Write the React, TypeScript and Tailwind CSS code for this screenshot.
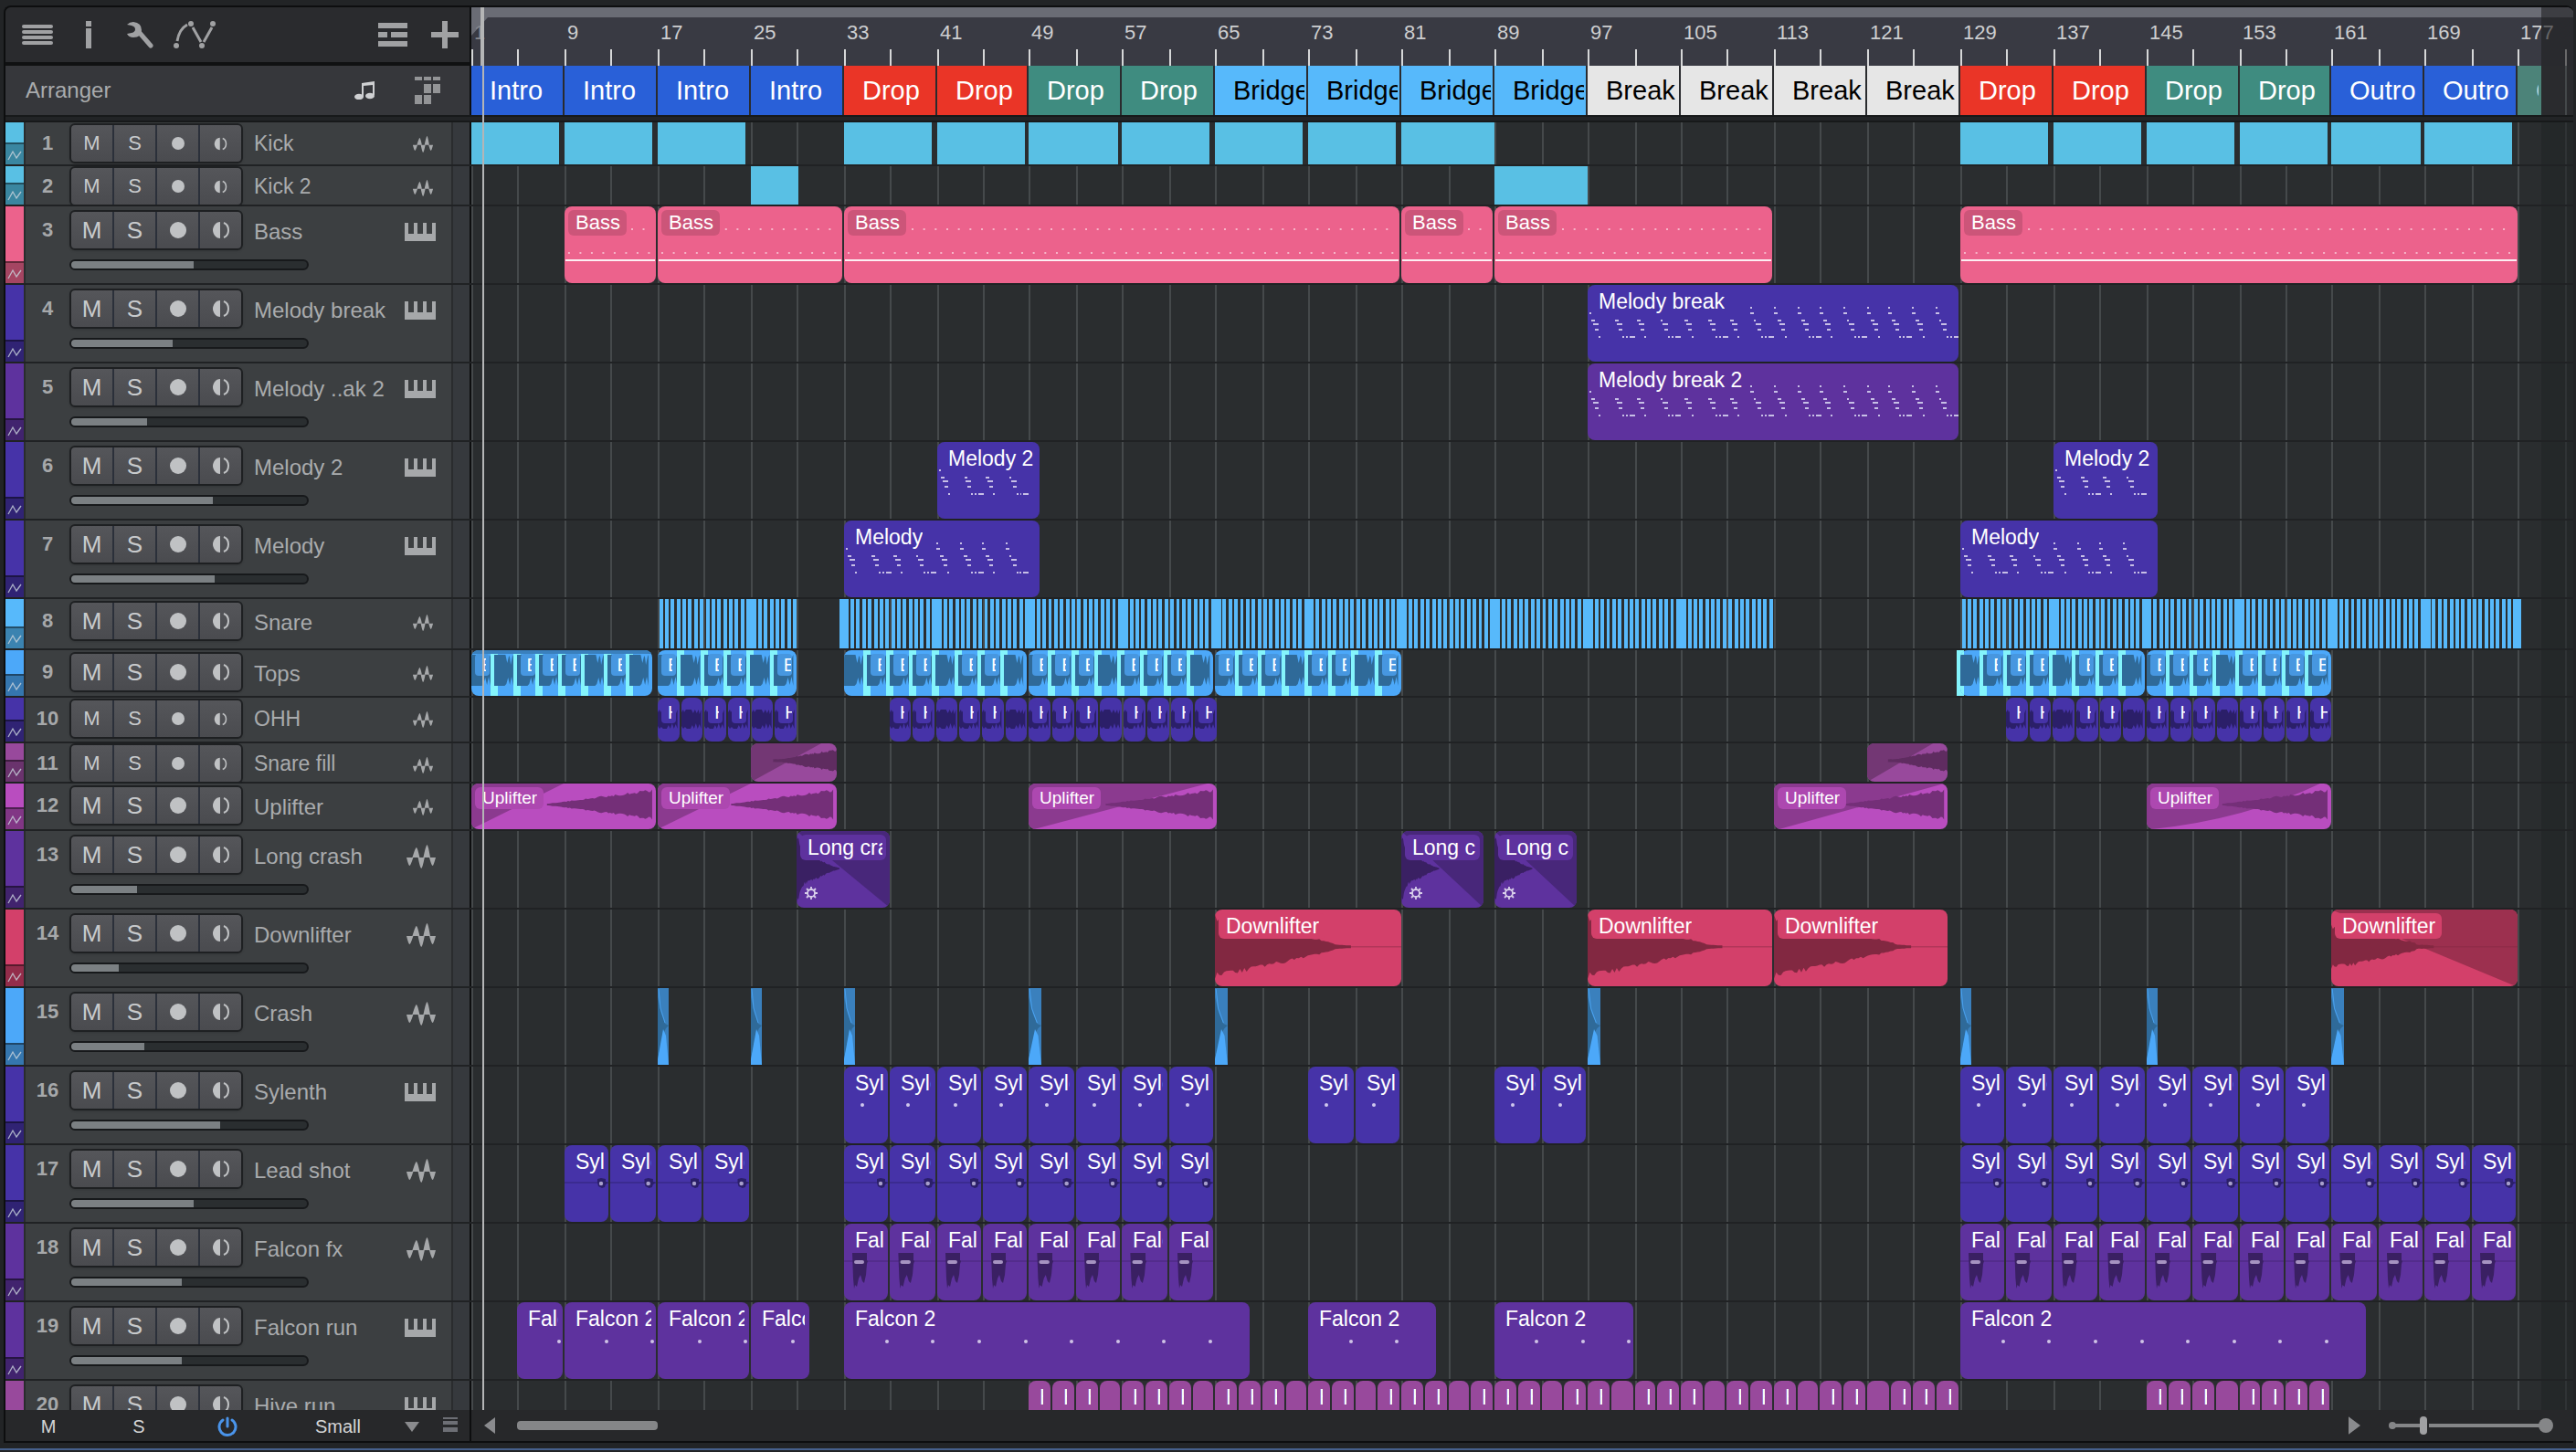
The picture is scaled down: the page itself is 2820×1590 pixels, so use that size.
import type { ReactNode } from "react";
import clsx from "clsx";

// number of bars that fit in the visible part of the timeline
const VISIBLE_BARS = 180.72;

// bar lines snap down to the two pixel raster of the grid
const barPos = (bar: number) =>
  `round(down, ${((bar - 1) / VISIBLE_BARS) * 100}% + 0.8px, 2px)`;
const barWidth = (from: number, to: number) => `calc(${barPos(to)} - ${barPos(from)})`;

type Kind =
  | "block"
  | "bass"
  | "melody"
  | "snare"
  | "tops"
  | "hat"
  | "fill"
  | "uplifter"
  | "longCrash"
  | "downlifter"
  | "crash"
  | "sylenth"
  | "lead"
  | "fx"
  | "run"
  | "hive";

interface Clip {
  from: number;
  to: number;
  label?: string;
  cells?: string;
  overlap?: boolean;
  fade?: string;
  notesFrom?: number;
  decay?: number;
}

interface Track {
  name: string;
  icon: "keys" | "wave" | "bigWave";
  kind: Kind;
  color: string;
  autoColor: string;
  row: string;
  small?: boolean;
  volume?: number;
  clips: Clip[];
}

const every = (from: number, to: number, step: number, label?: string) => {
  const clips: Clip[] = [];
  for (let bar = from; bar < to; bar += step) {
    clips.push({ from: bar, to: bar + step, label });
  }
  return clips;
};

const kicks = (starts: number[]) =>
  starts.map((bar) => ({ from: bar, to: bar + 7.55 }));

const hiveClips = () => {
  const blank = [3, 7, 11, 14, 18, 22, 25, 29, 33, 36];
  const first = every(49, 129, 2).map((clip, i) => ({
    ...clip,
    label: blank.includes(i) ? undefined : "H",
  }));
  const second = every(145, 161, 2).map((clip, i) => ({
    ...clip,
    label: i === 3 ? undefined : "H",
  }));
  return [...first, ...second];
};

const INDIGO = "bg-[#4633a8]";
const INDIGO_DARK = "bg-[#302374]";
const PURPLE = "bg-[#5e329e]";
const PURPLE_DARK = "bg-[#41236e]";
const CYAN = "bg-[#59c0e4]";
const CYAN_DARK = "bg-[#3a86a0]";
const TALL = "h-[86px]";
const SHORT = "h-[44px]";

const tracks: Track[] = [
  {
    name: "Kick", icon: "wave", kind: "block", color: CYAN, autoColor: CYAN_DARK,
    row: "h-[48px]", small: true,
    clips: [
      ...kicks([1, 9, 17, 33, 41, 49, 57, 65, 73]),
      { from: 81, to: 89 },
      ...kicks([129, 137, 145, 153, 161, 169]),
    ],
  },
  {
    name: "Kick 2", icon: "wave", kind: "block", color: CYAN, autoColor: CYAN_DARK,
    row: SHORT, small: true,
    clips: [{ from: 25, to: 29.1 }, { from: 89, to: 97 }],
  },
  {
    name: "Bass", icon: "keys", kind: "bass", color: "bg-[#ec628c]", autoColor: "bg-[#a54562]",
    row: TALL, volume: 52,
    clips: [
      { from: 9, to: 17 }, { from: 17, to: 33 }, { from: 33, to: 81 },
      { from: 81, to: 89 }, { from: 89, to: 113 }, { from: 129, to: 177.1 },
    ].map((clip) => ({ ...clip, label: "Bass" })),
  },
  {
    name: "Melody break", icon: "keys", kind: "melody", color: INDIGO, autoColor: INDIGO_DARK,
    row: TALL, volume: 43,
    clips: [{ from: 97, to: 129.1, label: "Melody break", notesFrom: 7 }],
  },
  {
    name: "Melody ..ak 2", icon: "keys", kind: "melody", color: PURPLE, autoColor: PURPLE_DARK,
    row: TALL, volume: 32,
    clips: [{ from: 97, to: 129.1, label: "Melody break 2", notesFrom: 7 }],
  },
  {
    name: "Melody 2", icon: "keys", kind: "melody", color: INDIGO, autoColor: INDIGO_DARK,
    row: TALL, volume: 60,
    clips: [
      { from: 41, to: 50.1, label: "Melody 2", notesFrom: 5 },
      { from: 137, to: 146.1, label: "Melody 2", notesFrom: 5 },
    ],
  },
  {
    name: "Melody", icon: "keys", kind: "melody", color: INDIGO, autoColor: INDIGO_DARK,
    row: TALL, volume: 61,
    clips: [
      { from: 33, to: 50.1, label: "Melody", notesFrom: 4 },
      { from: 129, to: 146.1, label: "Melody", notesFrom: 4 },
    ],
  },
  {
    name: "Snare", icon: "wave", kind: "snare", color: "bg-[#57b9fb]", autoColor: "bg-[#3b83b0]",
    row: "h-[56px]",
    clips: [{ from: 17, to: 29.1 }, { from: 32.6, to: 113.2 }, { from: 129, to: 177.3 }],
  },
  {
    name: "Tops", icon: "wave", kind: "tops", color: "bg-[#4ca8f9]", autoColor: "bg-[#3576ae]",
    row: "h-[52px]",
    clips: [
      { from: 1, to: 16.7, cells: "10111010", fade: "top" },
      { from: 17, to: 29.1, cells: "101101" },
      { from: 33, to: 49, cells: "01110110" },
      { from: 49, to: 65, cells: "11101110" },
      { from: 65, to: 81.2, cells: "11101101" },
      { from: 129, to: 145, cells: "01110110", overlap: true },
      { from: 145, to: 161.1, cells: "11101111" },
    ],
  },
  {
    name: "OHH", icon: "wave", kind: "hat", color: INDIGO, autoColor: INDIGO_DARK,
    row: "h-[50px]", small: true,
    clips: [
      { from: 17, to: 29.1, cells: "101101" },
      { from: 37, to: 49, cells: "110110" },
      { from: 49, to: 65.2, cells: "11101111" },
      { from: 133, to: 145, cells: "110110" },
      { from: 145, to: 161.1, cells: "11101111" },
    ],
  },
  {
    name: "Snare fill", icon: "wave", kind: "fill", color: "bg-[#98499c]", autoColor: "bg-[#6a336d]",
    row: SHORT, small: true,
    clips: [{ from: 25, to: 32.6 }, { from: 121, to: 128.1 }],
  },
  {
    name: "Uplifter", icon: "wave", kind: "uplifter", color: "bg-[#b94dbf]", autoColor: "bg-[#813685]",
    row: "h-[52px]",
    clips: [
      { from: 1, to: 17, fade: "M0 100L50 0H0Z" },
      { from: 17, to: 32.6, fade: "M0 100L52 0H0Z" },
      { from: 49, to: 65.2, fade: "M3 100L95 0H0V100Z" },
      { from: 113, to: 128.1, fade: "M3 100L98 0H0V100Z" },
      { from: 145, to: 161.1, fade: "M3 100Q54 78 94 0H0V100Z" },
    ].map((clip) => ({ ...clip, label: "Uplifter" })),
  },
  {
    name: "Long crash", icon: "bigWave", kind: "longCrash", color: PURPLE, autoColor: PURPLE_DARK,
    row: TALL, volume: 28,
    clips: [
      { from: 29, to: 37.1, label: "Long crash" },
      { from: 81, to: 88.2, label: "Long crash" },
      { from: 89, to: 96.2, label: "Long crash" },
    ],
  },
  {
    name: "Downlifter", icon: "bigWave", kind: "downlifter", color: "bg-[#d3406a]", autoColor: "bg-[#932c4a]",
    row: TALL, volume: 20,
    clips: [
      { from: 65, to: 81.2, label: "Downlifter", decay: 73 },
      { from: 97, to: 113, label: "Downlifter", decay: 73 },
      { from: 113, to: 128.1, label: "Downlifter", decay: 79 },
      { from: 161, to: 177.1, label: "Downlifter", decay: 55, fade: "M0 0L97 98L100 100V0Z" },
    ],
  },
  {
    name: "Crash", icon: "bigWave", kind: "crash", color: "bg-[#4ca8f9]", autoColor: "bg-[#3576ae]",
    row: TALL, volume: 31,
    clips: [17, 25, 33, 49, 65, 97, 129, 145, 161].map((bar) => ({ from: bar, to: bar + 1.05 })),
  },
  {
    name: "Sylenth", icon: "keys", kind: "sylenth", color: INDIGO, autoColor: INDIGO_DARK,
    row: TALL, volume: 63,
    clips: [
      ...every(33, 65, 4, "Sylenth"), ...every(73, 81, 4, "Sylenth"),
      ...every(89, 97, 4, "Sylenth"), ...every(129, 161, 4, "Sylenth"),
    ],
  },
  {
    name: "Lead shot", icon: "bigWave", kind: "lead", color: INDIGO, autoColor: INDIGO_DARK,
    row: TALL, volume: 52,
    clips: [
      ...every(9, 25, 4, "Sylenth"), ...every(33, 65, 4, "Sylenth"),
      ...every(129, 177, 4, "Sylenth"),
    ],
  },
  {
    name: "Falcon fx", icon: "bigWave", kind: "fx", color: PURPLE, autoColor: PURPLE_DARK,
    row: TALL, volume: 47,
    clips: [...every(33, 65, 4, "Falcon"), ...every(129, 177, 4, "Falcon")],
  },
  {
    name: "Falcon run", icon: "keys", kind: "run", color: PURPLE, autoColor: PURPLE_DARK,
    row: TALL, volume: 47,
    clips: [
      { from: 5, to: 9 }, { from: 9, to: 17 }, { from: 17, to: 25 }, { from: 25, to: 30.2 },
      { from: 33, to: 68.1 }, { from: 73, to: 84.1 }, { from: 89, to: 101.1 }, { from: 129, to: 164.1 },
    ].map((clip) => ({ ...clip, label: "Falcon 2" })),
  },
  {
    name: "Hive run", icon: "keys", kind: "hive", color: "bg-[#98499c]", autoColor: "bg-[#6a336d]",
    row: TALL, volume: 50,
    clips: hiveClips(),
  },
];

const section = (bar: number, name: string, style: string) => ({ bar, name, style });
const BLUE = "bg-[#2960d8] text-white";
const RED = "bg-[#ea3527] text-white";
const GREEN = "bg-[#3f8c80] text-white";
const SKY = "bg-[#57b9fb] text-black";
const WHITE = "bg-[#e6e6e6] text-black";

const sections = [
  ...[1, 9, 17, 25].map((bar) => section(bar, "Intro", BLUE)),
  ...[33, 41].map((bar) => section(bar, "Drop", RED)),
  ...[49, 57].map((bar) => section(bar, "Drop", GREEN)),
  ...[65, 73, 81, 89].map((bar) => section(bar, "Bridge", SKY)),
  ...[97, 105, 113, 121].map((bar) => section(bar, "Break", WHITE)),
  ...[129, 137].map((bar) => section(bar, "Drop", RED)),
  ...[145, 153].map((bar) => section(bar, "Drop", GREEN)),
  ...[161, 169].map((bar) => section(bar, "Outro", BLUE)),
];

const gridBars = Array.from({ length: 46 }, (_, i) => 1 + i * 4).filter(
  (bar) => bar - 1 < VISIBLE_BARS
);

// builds a jagged, roughly symmetric outline from [x, amplitude] stops
const wavePath = (stops: [number, number][], middle: number) => {
  const top: string[] = [];
  const bottom: string[] = [];
  const start = stops[0][0];
  const end = stops[stops.length - 1][0];
  const steps = 60;
  for (let i = 0; i <= steps; i++) {
    const x = start + ((end - start) * i) / steps;
    const next = Math.max(1, stops.findIndex((stop) => stop[0] >= x));
    const [x0, a0] = stops[next - 1];
    const [x1, a1] = stops[next];
    const amp = a0 + ((a1 - a0) * (x - x0)) / (x1 - x0);
    const noise = 1 - 0.2 * Math.abs(Math.sin(i * i * 1.7));
    top.push(`${x.toFixed(1)} ${(middle - amp * noise).toFixed(1)}`);
    bottom.unshift(`${x.toFixed(1)} ${(middle + amp * noise).toFixed(1)}`);
  }
  return `M${top.join("L")}L${bottom.join("L")}Z`;
};

const Drawing = ({ box = "0 0 100 100", children }: { box?: string; children: ReactNode }) => (
  <svg
    className="absolute inset-0 w-full h-full"
    viewBox={box}
    preserveAspectRatio="none"
    aria-hidden="true"
  >
    {children}
  </svg>
);

const ClipLabel = ({ text, className }: { text: string; className?: string }) => (
  <div
    className={clsx(
      "absolute left-1 top-1 max-w-[calc(100%-8px)] rounded-md pl-2 text-white",
      className ?? "h-7 pr-px text-[23px] leading-7"
    )}
  >
    <span className="block overflow-hidden whitespace-nowrap">{text}</span>
  </div>
);

const BassNotes = ({ bars }: { bars: number }) => {
  const notes = Array.from({ length: Math.floor(bars) }, (_, i) => i);
  return (
    <Drawing box={`0 0 ${bars * 12.73} 84`}>
      {notes.map((i) => (
        <g key={i} fill="#f7b4c8">
          {i > 5 && <rect x={i * 12.73 - 2} y="24" width="2" height="2" />}
          <rect x={i * 12.73 + 4} y="50" width="2" height="2" />
        </g>
      ))}
      <rect x="1" y="58" width={bars * 12.73 - 2} height="2" fill="#fdeef3" />
    </Drawing>
  );
};

const MelodyNotes = ({ bars, notesFrom }: { bars: number; notesFrom: number }) => {
  const width = bars * 12.73 - 2;
  const motifs = Array.from({ length: Math.floor(bars / 2) }, (_, i) => i);
  return (
    <Drawing box={`0 0 ${width} 84`}>
      {motifs.map((i) => {
        const x = Math.round((i * 25.46) / 2) * 2;
        return (
          <g key={i} fill="#c7bfe6" shapeRendering="crispEdges">
            {i >= notesFrom && <rect x={x} y="24" width="2" height="2" />}
            {i >= notesFrom && <rect x={x} y="30" width="4" height="2" />}
            {i === 0 && <rect x="2" y="30" width="2" height="2" />}
            <rect x={x + 4} y="38" width={i % 4 === 3 ? 2 : 4} height="2" />
            <rect x={x + 6} y="42" width="6" height="2" />
            <rect x={x + 8} y="48" width="4" height="2" />
            <rect x={x + 12} y="56" width="2" height="2" />
            {i % 2 === 1 && <rect x={x + 16} y="56" width="2" height="2" />}
            {i % 2 === 1 && <rect x={x + 20} y="56" width="6" height="2" />}
          </g>
        );
      })}
    </Drawing>
  );
};

const SnareHits = ({ from, to }: { from: number; to: number }) => {
  const hits: number[] = [];
  for (let bar = Math.ceil(from * 2) / 2; bar < to - 0.2; bar += 0.5) hits.push(bar);
  return (
    <Drawing box={`${from} 0 ${to - from} 10`}>
      <g fill="#57b9fb" shapeRendering="crispEdges">
        {hits.map((bar) =>
          (bar - 1) % 8 === 0 && bar !== from ? (
            <rect key={bar} x={bar - 0.32} y="0" width="0.8" height="10" />
          ) : (
            <rect key={bar} x={bar + 0.13} y="0" width="0.31" height="10" />
          )
        )}
      </g>
    </Drawing>
  );
};

const CellLabel = ({ text, last, className }: { text: string; last: boolean; className: string }) => (
  <div
    className={clsx(
      "absolute left-1 top-1 h-6 w-4 rounded-sm pl-[7px] text-[20px] leading-6 text-white",
      className
    )}
  >
    <span className={clsx("block overflow-hidden", last ? "w-2" : "w-[5px]")}>{text}</span>
  </div>
);

const TopsCells = ({ clip }: { clip: Clip }) => (
  <div className="relative flex h-full overflow-hidden rounded-lg bg-[#4ca8f9]">
    {clip.cells!.split("").map((cell, i) => (
      <div key={i} className="relative flex-1">
        {(i > 0 || clip.overlap) && (
          <div className="absolute inset-y-0 -left-1 w-2 bg-[#84f4fc]" />
        )}
        <Drawing box="0 0 26 50">
          <path
            d="M0 5H13L15 14L17 6L18 8L19 16L21 7L22 5V39L20 29L18 38L16 30L14 37L12 39H0Z"
            fill="#2f6a99"
          />
        </Drawing>
        {cell === "1" && (
          <CellLabel text="E" last={i === clip.cells!.length - 1} className="bg-[#4797e0]" />
        )}
      </div>
    ))}
    {clip.fade && <div className="absolute inset-x-0 top-0 h-1 bg-[#3a80bd]" />}
  </div>
);

const HatCells = ({ cells }: { cells: string }) => (
  <div className="flex h-full gap-0.5">
    {cells.split("").map((cell, i) => (
      <div key={i} className="relative flex-1 overflow-hidden rounded-lg bg-[#4633a8]">
        <Drawing box="0 0 24 48">
          <path
            d="M0 16L2 13L3 16L5 13H11L13 17L15 13L17 17L19 13L20 18L22 13V34L20 29L18 34L16 28L14 34L12 30L10 34H6L4 32L2 34L0 31Z"
            fill="#2b1f69"
          />
        </Drawing>
        {cell === "1" && (
          <CellLabel text="H" last={i === cells.length - 1} className="bg-[#4633a8]" />
        )}
      </div>
    ))}
  </div>
);

const Gear = () => (
  <svg className="absolute bottom-2 left-2 size-4" viewBox="0 0 16 16" aria-hidden="true">
    <circle cx="8" cy="8" r="4" fill="none" stroke="#d8cfea" strokeWidth="1.8" />
    <path
      d="M8 1v3M8 12v3M1 8h3M12 8h3M3 3l2 2M11 11l2 2M13 3l-2 2M5 11l-2 2"
      stroke="#d8cfea"
      strokeWidth="1.8"
    />
  </svg>
);

const Dots = ({ clip }: { clip: Clip }) => {
  const bars: number[] = [];
  for (let bar = 3.7; bar < clip.to - clip.from && bars.length < 8; bar += 4) bars.push(bar);
  return (
    <>
      {bars.map((bar) => (
        <span
          key={bar}
          className="absolute top-[41px] h-1 w-1 -translate-x-1/2 rounded-full bg-[#cfc3e6]"
          style={{ left: `${(bar / (clip.to - clip.from)) * 100}%` }}
        />
      ))}
    </>
  );
};

const ClipBody = ({ track, clip }: { track: Track; clip: Clip }) => {
  const bars = clip.to - clip.from;
  switch (track.kind) {
    case "block":
      return null;
    case "bass":
      return (
        <>
          <BassNotes bars={bars} />
          <ClipLabel text={clip.label!} className="h-7 pr-[7px] bg-[#cc5579] text-[22px] leading-7" />
        </>
      );
    case "melody":
      return (
        <>
          <MelodyNotes bars={bars} notesFrom={clip.notesFrom!} />
          <ClipLabel text={clip.label!} />
        </>
      );
    case "fill":
      return (
        <Drawing>
          <path d="M4 96L82 0H0V100Z" fill="#733774" />
          <path d={wavePath([[26, 4], [38, 5], [70, 20], [100, 30]], 45)} fill="#5f2c60" />
        </Drawing>
      );
    case "uplifter":
      return (
        <>
          <Drawing>
            <path d={clip.fade} fill="#8b3a8f" />
            <path d={wavePath([[41, 2], [52, 8], [80, 24], [98, 34]], 46)} fill="#742f78" />
          </Drawing>
          <ClipLabel text={clip.label!} className="h-6 pr-[7px] bg-[#ad48b0] text-[19px] leading-6" />
        </>
      );
    case "longCrash":
      return (
        <>
          <Drawing>
            <path d="M0 0L98 98L100 92V0Z" fill="#48277a" />
            <path d={wavePath([[0, 50], [8, 22], [22, 14], [40, 3], [46, 1]], 49)} fill="#3a2063" />
          </Drawing>
          <ClipLabel text={clip.label!} className="h-7 pr-1 bg-[#5e329e] text-[23px] leading-7" />
          <Gear />
        </>
      );
    case "downlifter":
      return (
        <>
          <Drawing>
            {clip.fade && <path d={clip.fade} fill="#9c304f" />}
            <path d="M0 48.5H100" stroke="#822841" strokeOpacity="0.4" strokeWidth="2" />
            <path
              d={wavePath(
                [
                  [0, clip.fade ? 29 : 42],
                  [10, clip.fade ? 27 : 38],
                  [clip.decay! - 10, 6],
                  [clip.decay! - 9, 3],
                  [clip.decay!, 2],
                ],
                48.5
              )}
              fill="#822841"
            />
          </Drawing>
          <ClipLabel text={clip.label!} className="h-7 pr-[7px] bg-[#d3406a] text-[23px] leading-7" />
        </>
      );
    case "crash":
      return (
        <Drawing box="0 0 12 84">
          <path d="M0 0H12V84H0Z" fill="#3a80bd" />
          <path d="M0 10L4 28L8 39L12 41L9 44L7 48L0 78Z" fill="#2f6a99" />
          <path d="M0 84V78L6 45L9 52L12 84Z" fill="#4ca8f9" />
          <path d="M1 1L3 22L8 38" fill="none" stroke="#4ca8f9" strokeWidth="0.8" />
        </Drawing>
      );
    case "sylenth":
      return (
        <>
          <ClipLabel text={clip.label!} />
          <span className="absolute left-[18px] top-[40px] h-1 w-1 rounded-full bg-[#cfc8ec]" />
        </>
      );
    case "lead":
      return (
        <>
          <Drawing box="0 0 48 84">
            <path d="M0 41H48" stroke="#3b2b90" strokeWidth="2" />
            <path d="M36 37L40 36L45 37V40L48 41L45 43L44 46L41 47L37 45L36 41Z" fill="#2b1f69" />
            <circle cx="40" cy="42" r="2.2" fill="#a79fcb" />
          </Drawing>
          <ClipLabel text={clip.label!} />
        </>
      );
    case "fx":
      return (
        <>
          <Drawing box="0 0 48 84">
            <path d="M0 41H48" stroke="#532c8c" strokeWidth="2" />
            <path d="M9 32H25V40L26 41L25 44L24 56L22 65L20 63L18 56L16 60L14 69L12 67L11 71L10 60Z" fill="#3a2063" />
            <rect x="11" y="40" width="11" height="4" rx="2" fill="#a693c1" />
          </Drawing>
          <ClipLabel text={clip.label!} />
        </>
      );
    case "run":
      return (
        <>
          <ClipLabel text={clip.label!} />
          <Dots clip={clip} />
        </>
      );
    case "hive":
      return clip.label ? (
        <div className="absolute left-3 top-1 text-[23px] leading-7 text-white">
          <span className="block w-1 overflow-hidden">{clip.label}</span>
        </div>
      ) : null;
    default:
      return null;
  }
};

const ClipView = ({ track, clip }: { track: Track; clip: Clip }) => {
  const left = barPos(clip.from);
  const width = barWidth(clip.from, clip.to);

  if (track.kind === "snare") {
    return (
      <div className="absolute inset-y-0" style={{ left, width }}>
        <SnareHits from={clip.from} to={clip.to} />
      </div>
    );
  }
  if (track.kind === "tops" || track.kind === "hat") {
    return (
      <div className="absolute inset-y-0 pr-0.5" style={{ left, width }}>
        {clip.overlap && <div className="absolute inset-y-0 -left-1 w-2 bg-[#84f4fc]" />}
        {track.kind === "tops" ? <TopsCells clip={clip} /> : <HatCells cells={clip.cells!} />}
      </div>
    );
  }

  const square = track.kind === "block" || track.kind === "crash";
  return (
    <div className={clsx("absolute inset-y-0", !square && "pr-0.5")} style={{ left, width }}>
      <div className={clsx("relative h-full overflow-hidden", track.color, !square && "rounded-lg")}>
        <ClipBody track={track} clip={clip} />
      </div>
    </div>
  );
};

const TrackIcon = ({ icon }: { icon: Track["icon"] }) => {
  if (icon === "keys") {
    return (
      <svg className="h-5 w-[34px]" viewBox="0 0 34 20" fill="#a6a8aa" aria-hidden="true">
        <path d="M0 0H4V12H10V0H14V12H20V0H24V12H30V0H34V20H0Z" />
      </svg>
    );
  }
  return (
    <svg
      className={icon === "wave" ? "ml-1.5 h-[18px] w-6" : "ml-0.5 h-[26px] w-8"}
      viewBox="0 0 32 26"
      fill="#a6a8aa"
      aria-hidden="true"
    >
      <path d="M6.4 14Q9.8 3 10.8 3Q12 3 14.4 14ZM18.4 14Q21.4 0 22.5 0Q23.6 0 26 14Z" />
      <path d="M0 14H7.4Q4.4 23 3.4 23Q2.2 23 0 14ZM12.6 14H19.8Q17.4 26 16.2 26Q15 26 12.6 14ZM25 14H32Q29.6 23 28.6 23Q27.4 23 25 14Z" />
    </svg>
  );
};

const TrackHeader = ({ track, index }: { track: Track; index: number }) => {
  const id = `volume-${index}`;
  const tall = track.volume !== undefined;
  const large = !track.small;
  return (
    <div className="flex h-full w-[510px] shrink-0 border-r-2 border-[#0d0e0f] bg-[#3c3f41]">
      <div className={clsx("flex w-5 shrink-0 flex-col justify-end", track.color)}>
        <div className={clsx("h-6 border-t-2 border-black/40", track.autoColor)}>
          <svg className="h-[22px] w-5" viewBox="0 0 20 22" aria-hidden="true">
            <path d="M3 17L8 8L12 15L17 8" fill="none" stroke="#c9d3dc" strokeOpacity="0.8" strokeWidth="1.3" />
          </svg>
        </div>
      </div>
      <div className="relative flex min-w-0 flex-1 flex-col border-l-2 border-[#2a2c2e]">
        <div
          className={clsx(
            "flex items-center",
            tall ? "pt-1" : large ? "pt-0.5" : track.row !== SHORT && "pt-px"
          )}
        >
          <span className="w-12 text-center text-[22px] font-bold leading-6 text-[#a6a8aa]">
            {index}
          </span>
          <div
            className={clsx(
              "flex h-[44px] w-[190px] shrink-0 divide-x-2 divide-[#2b303a] rounded-md border-2 border-[#1e2022] bg-linear-to-b from-[#55565a] to-[#4a4b4f] text-[#c8cacc] shadow-sm",
              large ? "text-[26px]" : "text-[22px]"
            )}
          >
            <button className="flex-1 leading-9" aria-label={`Mute ${track.name}`}>M</button>
            <button className="flex-1 leading-9" aria-label={`Solo ${track.name}`}>S</button>
            <button className="flex flex-1 items-center justify-center" aria-label={`Record ${track.name}`}>
              <span className={clsx("rounded-full bg-[#c0c2c4]", large ? "size-[18px]" : "size-[14px]")} />
            </button>
            <button className="flex flex-1 items-center justify-center" aria-label={`Monitor ${track.name}`}>
              <svg className={large ? "size-[20px]" : "size-[15px]"} viewBox="0 0 20 20" aria-hidden="true">
                <path d="M9 1V19C4 19 1 14 1 10S4 1 9 1Z" fill="#c0c2c4" />
                <path d="M13 2Q18 4 18 10T13 18" fill="none" stroke="#c0c2c4" strokeWidth="2" />
              </svg>
            </button>
          </div>
          <span
            className={clsx(
              "ml-3 flex-1 whitespace-nowrap leading-7 text-[#a9abad]",
              large ? "pt-1 text-[24px]" : "text-[23px]"
            )}
          >
            {track.name}
          </span>
        </div>
        <div
          className={clsx(
            "absolute right-4 flex h-[44px] w-9 items-center justify-center",
            tall ? "top-1.5" : large ? "top-1" : "top-0.5"
          )}
        >
          <TrackIcon icon={track.icon} />
        </div>
        {tall && (
          <>
            <label htmlFor={id} className="sr-only">
              Volume {track.name}
            </label>
            <input
              id={id}
              type="range"
              defaultValue={track.volume}
              className="ml-12 mt-[10px] block h-3 w-[262px] appearance-none rounded-md border-2 border-[#17191b] [&::-webkit-slider-thumb]:size-0 [&::-webkit-slider-thumb]:appearance-none"
              style={{
                background: `linear-gradient(to right, #7b8083 ${track.volume}%, #2a2e30 ${track.volume}%)`,
              }}
            />
          </>
        )}
      </div>
      <div className="w-5 shrink-0 border-l-2 border-[#2a2c2e] bg-[#36393d]" />
    </div>
  );
};

const Toolbar = () => (
  <div className="flex h-16 items-center border-b-4 border-[#101112] bg-[#2a2b2e] pl-[18px] pr-3">
    <button aria-label="Menu">
      <svg className="h-6 w-[34px]" viewBox="0 0 34 24" fill="#a0a1a3">
        <rect y="1" width="34" height="4" rx="2" />
        <rect y="7" width="34" height="4" rx="2" />
        <rect y="13" width="34" height="4" rx="2" />
        <rect y="19" width="34" height="4" rx="2" />
      </svg>
    </button>
    <button className="ml-[36px]" aria-label="Info">
      <svg className="h-[30px] w-1.5" viewBox="0 0 6 30" fill="#a0a1a3">
        <rect width="6" height="6" />
        <rect y="8" width="6" height="22" />
      </svg>
    </button>
    <button className="ml-[38px]" aria-label="Tools">
      <svg className="h-[30px] w-[30px]" viewBox="0 0 30 30">
        <path d="M14 12L27 27" stroke="#a0a1a3" strokeWidth="5" strokeLinecap="round" />
        <path
          d="M1 4Q4 1 8 1Q17 2 17 10Q17 18 8 18Q3 18 1 14L6 13Q10 12 10 9Q10 6 6 5Z"
          fill="#a0a1a3"
        />
      </svg>
    </button>
    <button className="ml-[21px]" aria-label="Automation">
      <svg className="h-[30px] w-[48px]" viewBox="0 0 48 30" fill="none" stroke="#a0a1a3" strokeWidth="3">
        <path d="M5 22Q7 9 16 4M22 7L31 23M34 23L43 7" />
        <g fill="#a0a1a3" stroke="none">
          <circle cx="4" cy="27" r="3" />
          <circle cx="20" cy="3" r="3" />
          <circle cx="32" cy="27" r="3" />
          <circle cx="44" cy="3" r="3" />
        </g>
      </svg>
    </button>
    <button className="ml-auto" aria-label="Track list">
      <svg className="h-[26px] w-8" viewBox="0 0 32 26" fill="#a0a1a3">
        <path d="M0 0H32V6H0ZM0 10H10V16H0ZM14 10H32V16H14ZM0 20H32V26H0Z" />
      </svg>
    </button>
    <button className="ml-[26px]" aria-label="Add track">
      <svg className="size-[30px]" viewBox="0 0 30 30" fill="#a0a1a3">
        <path d="M12 0H18V12H30V18H18V30H12V18H0V12H12Z" />
      </svg>
    </button>
  </div>
);

const ArrangerHeader = () => (
  <div className="flex h-[54px] items-center bg-[#36373b] pl-[22px] pr-8">
    <span className="text-[24px] leading-7 text-[#a9abad]">Arranger</span>
    <svg className="ml-auto h-5 w-[22px]" viewBox="0 0 22 20" fill="#cfd0d2" aria-hidden="true">
      <path d="M8 2L22 0V15H20V4L10 5V17H8Z" />
      <ellipse cx="5" cy="17" rx="5" ry="3.2" />
      <ellipse cx="17" cy="16" rx="5" ry="3.2" />
    </svg>
    <svg className="ml-[44px] h-[30px] w-7" viewBox="0 0 28 30" fill="#939496" aria-hidden="true">
      <path d="M0 0H8V4H0ZM10 0H18V4H10ZM20 0H28V4H20ZM10 8H18V18H10ZM20 8H28V18H20ZM0 20H8V30H0ZM10 20H18V30H10Z" />
    </svg>
  </div>
);

const Ruler = () => (
  <div className="relative h-16 overflow-hidden bg-[#393a43]">
    <div className="h-[11px] bg-[#6a6c75]" />
    <svg className="absolute left-0 top-[11px] h-5 w-[18px]" viewBox="0 0 18 20" aria-hidden="true">
      <path d="M0 0H18L0 20Z" fill="#6a6c75" />
    </svg>
    {gridBars.map((bar) => (
      <div key={bar} className="absolute inset-y-0 pl-[3px] pt-4" style={{ left: barPos(bar) }}>
        <span className="absolute bottom-0 left-0 h-[18px] w-0.5 bg-[#d6d7d8]" />
        {(bar - 1) % 8 === 0 && (
          <span
            className={clsx(
              "block text-[22px] leading-6",
              bar === 1 ? "text-[#85878d]" : "text-[#cdced0]"
            )}
          >
            {bar}
          </span>
        )}
      </div>
    ))}
    <div className="absolute inset-y-0 right-0 bg-[#1f2022]/60" style={{ left: barPos(179) }} />
  </div>
);

const ArrangerTrack = () => (
  <div className="relative h-[54px] overflow-hidden bg-[#2a2b2e]">
    {sections.map(({ bar, name, style }) => (
      <div
        key={bar}
        className="absolute inset-y-0 pr-0.5"
        style={{ left: barPos(bar), width: barWidth(bar, bar + 8) }}
      >
        <div className={clsx("flex h-full items-center pl-5 pr-0.5 text-[29px] leading-8", style)}>
          <span className="overflow-hidden whitespace-nowrap">{name}</span>
        </div>
      </div>
    ))}
    <div
      className="absolute inset-y-0 flex items-center overflow-hidden bg-[#4c8379] pl-5 text-[29px] leading-8 text-white/70"
      style={{ left: barPos(177), width: barWidth(177, 179) }}
    >
      <span className="w-[3px] overflow-hidden">Outro</span>
    </div>
    <div className="absolute inset-y-0 w-0.5 bg-[#44484a]" style={{ left: barPos(181) }} />
  </div>
);

const Footer = () => (
  <div className="flex h-[34px] shrink-0 items-center bg-[#27282a]">
    <div className="flex h-full w-[510px] shrink-0 items-center border-r-2 border-[#0d0e0f] pt-0.5 text-[20px] text-[#d4d5d6]">
      <button className="w-[94px] leading-6" aria-label="Clear all mutes">M</button>
      <button className="w-[104px] leading-6" aria-label="Clear all solos">S</button>
      <button className="flex w-[90px] justify-center" aria-label="Power">
        <svg className="size-[22px]" viewBox="0 0 22 22" fill="none" stroke="#4a94ea" strokeWidth="3" strokeLinecap="round">
          <path d="M6 4A9 9 0 1 0 16 4M11 2V11" />
        </svg>
      </button>
      <label htmlFor="track-size" className="sr-only">
        Track size
      </label>
      <select
        id="track-size"
        defaultValue="Small"
        className="ml-[51px] w-[94px] appearance-none bg-transparent leading-6"
      >
        <option>Small</option>
        <option>Normal</option>
        <option>Large</option>
      </select>
      <svg className="ml-1 h-[11px] w-4" viewBox="0 0 16 11" fill="#8a8b8e" aria-hidden="true">
        <path d="M0 0H16L8 11Z" />
      </svg>
      <svg className="mb-1 ml-[26px] h-4 w-4" viewBox="0 0 16 16" fill="#6d6f75" aria-hidden="true">
        <path d="M0 0H16V2H0ZM0 4H16V8H0ZM0 11H16V16H0Z" />
      </svg>
    </div>
    <div className="flex min-w-0 flex-1 items-center">
      <button className="ml-[14px]" aria-label="Scroll left">
        <svg className="h-[18px] w-3" viewBox="0 0 12 18" fill="#8a8b8e">
          <path d="M12 0V18L0 9Z" />
        </svg>
      </button>
      <div className="ml-6 flex-1">
        <div className="h-[10px] w-[154px] rounded-sm bg-[#858688]" />
      </div>
      <button className="mr-[31px]" aria-label="Scroll right">
        <svg className="h-[20px] w-[13px]" viewBox="0 0 12 18" fill="#8a8b8e">
          <path d="M0 0V18L12 9Z" />
        </svg>
      </button>
      <div className="relative mr-[22px] h-5 w-[180px]">
        <svg className="absolute inset-0 h-5 w-[180px]" viewBox="0 0 180 20" fill="#858688" aria-hidden="true">
          <circle cx="4" cy="10" r="4" />
          <path d="M4 8H34V12H4ZM44 8H172V12H44Z" />
          <circle cx="172" cy="10" r="8" />
        </svg>
        <input
          type="range"
          aria-label="Zoom"
          defaultValue={20}
          className="absolute inset-0 h-5 w-[180px] appearance-none bg-transparent [&::-webkit-slider-thumb]:h-5 [&::-webkit-slider-thumb]:w-2 [&::-webkit-slider-thumb]:appearance-none [&::-webkit-slider-thumb]:rounded-sm [&::-webkit-slider-thumb]:bg-[#a0a1a3]"
        />
      </div>
    </div>
  </div>
);

export default function App() {
  return (
    <div className="flex h-screen flex-col border-b-2 border-[#222426] bg-[#222426] pt-1.5 font-['Liberation_Sans',Arial,sans-serif]">
      <div className="flex min-h-0 flex-1 flex-col border-b-2 border-[#46608c] pb-1.5 pl-1">
        <div className="mr-[3px] flex min-h-0 flex-1 flex-col overflow-hidden rounded-t-lg border-y-2 border-l-2 border-[#0d0e0f]">
          <div className="relative flex min-h-0 flex-1 flex-col">
            <div className="flex shrink-0">
              <div className="w-[510px] shrink-0 border-r-2 border-[#0d0e0f]">
                <Toolbar />
                <ArrangerHeader />
              </div>
              <div className="min-w-0 flex-1">
                <Ruler />
                <ArrangerTrack />
              </div>
            </div>
            <div className="h-2 shrink-0 border-y-2 border-[#17191a] bg-[#222426]" />

            <div className="relative min-h-0 flex-1 overflow-hidden bg-[#2a2d2f]">
              <div className="absolute inset-y-0 left-[510px] right-0">
                {gridBars.map((bar) => (
                  <div
                    key={bar}
                    className="absolute inset-y-0 w-0.5 bg-[#45494b]"
                    style={{ left: barPos(bar) }}
                  />
                ))}
                <div
                  className="absolute inset-y-0 right-0 bg-[#222426]/60"
                  style={{ left: barPos(179) }}
                />
              </div>
              {tracks.map((track, i) => (
                <div
                  key={track.name}
                  className={clsx("relative flex border-b-2 border-[#202224]", track.row)}
                >
                  <TrackHeader track={track} index={i + 1} />
                  <div className="relative min-w-0 flex-1 overflow-hidden">
                    {track.clips.map((clip) => (
                      <ClipView key={clip.from} track={track} clip={clip} />
                    ))}
                  </div>
                </div>
              ))}
            </div>

            <div className="absolute bottom-0 left-[522px] top-0 w-0.5 bg-[#b4b5b6]" />
            <div className="absolute left-[520px] top-0 h-16 w-1 bg-[#b4b5b6]" />
          </div>
          <Footer />
        </div>
      </div>
    </div>
  );
}
